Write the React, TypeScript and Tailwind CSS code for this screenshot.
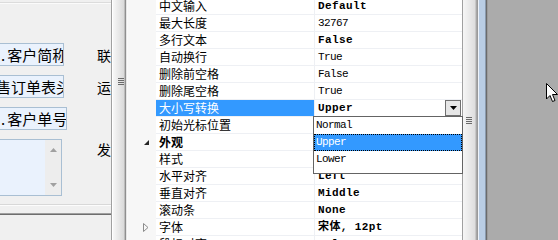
import React from "react";

type Row = {
  name: string;
  value?: string;
  bold?: boolean;
  selected?: boolean;
  category?: boolean;
  expand?: boolean;
};

const rows: Row[] = [
  { name: "中文输入", value: "Default", bold: true },
  { name: "最大长度", value: "32767" },
  { name: "多行文本", value: "False", bold: true },
  { name: "自动换行", value: "True" },
  { name: "删除前空格", value: "False" },
  { name: "删除尾空格", value: "True" },
  { name: "大小写转换", value: "Upper", bold: true, selected: true },
  { name: "初始光标位置", value: "Normal" },
  { name: "外观", category: true },
  { name: "样式", value: "" },
  { name: "水平对齐", value: "Left", bold: true },
  { name: "垂直对齐", value: "Middle", bold: true },
  { name: "滚动条", value: "None", bold: true },
  { name: "字体", value: "宋体, 12pt", bold: true, expand: true },
  { name: "段标对齐", value: "False", bold: true },
];

const cjk = { fontFamily: '"Noto Sans CJK SC", "Noto Sans", sans-serif' };
const mono = { fontFamily: '"Liberation Mono", "Noto Sans CJK SC", monospace' };

function Grip() {
  return (
    <div className="flex flex-col gap-[1px]">
      <div className="h-[1px] w-[6px] bg-[#6a6a6a]" />
      <div className="h-[1px] w-[6px] bg-[#6a6a6a]" />
      <div className="h-[1px] w-[6px] bg-[#6a6a6a]" />
      <div className="h-[1px] w-[6px] bg-[#6a6a6a]" />
    </div>
  );
}

function Value({ row }: { row: Row }) {
  if (row.category) return null;
  return (
    <span
      className={
        row.bold
          ? "text-[11px] font-bold tracking-[0.4px] text-black whitespace-nowrap"
          : "text-[11px] tracking-[-0.6px] text-black whitespace-nowrap"
      }
      style={mono}
    >
      {row.value}
    </span>
  );
}

export default function App() {
  return (
    <div className="relative flex h-[240px] w-[558px] overflow-hidden bg-[#f0f0f0]">
      {/* Left designer panel */}
      <div className="flex w-[111px] shrink-0 flex-col bg-[#f0f0f0]" style={cjk}>
        <div className="mt-[2px] h-[1px] w-full bg-[#dcdcdc]" />
        <div className="h-[1px] w-full bg-[#fbfbfb]" />
        <div className="mt-[39px] flex h-[23px] items-center">
          <div className="flex h-[23px] w-[67px] items-center overflow-hidden whitespace-nowrap border border-l-0 border-[#a9bfd3] bg-[#eaf2fd] text-[15px] leading-none text-black">
            <span className="ml-[1px]">.</span>
            <span className="ml-[2px]">客户简称</span>
          </div>
          <span className="ml-[33px] text-[14px] leading-none text-black">联</span>
        </div>
        <div className="mt-[9px] flex h-[23px] items-center">
          <div className="flex h-[23px] w-[67px] items-center overflow-hidden whitespace-nowrap border border-l-0 border-[#a9bfd3] bg-[#eaf2fd] text-[15px] leading-none text-black">
            <span className="ml-[-4px]">售订单表头</span>
          </div>
          <span className="ml-[33px] text-[14px] leading-none text-black">运</span>
        </div>
        <div className="mt-[9px] flex h-[23px] items-center">
          <div className="flex h-[23px] w-[67px] items-center overflow-hidden whitespace-nowrap border border-l-0 border-[#a9bfd3] bg-[#eaf2fd] text-[15px] leading-none text-black">
            <span className="ml-[1px]">.</span>
            <span className="ml-[2px]">客户单号</span>
          </div>
        </div>
        <div className="mt-[9px] flex h-[57px] items-start">
          <div className="flex h-[57px] w-[68px] justify-end border border-l-0 border-[#a9bfd3] bg-[#eaf2fd]">
            <div className="flex w-[16px] flex-col items-center justify-between bg-[#ededed] py-[8px]">
              <svg width="7" height="4" viewBox="0 0 7 4">
                <path d="M0 4 L3.5 0 L7 4 Z" fill="#a0a0a0" />
              </svg>
              <svg width="7" height="4" viewBox="0 0 7 4">
                <path d="M0 0 L3.5 4 L7 0 Z" fill="#a0a0a0" />
              </svg>
            </div>
          </div>
          <span className="ml-[35px] mt-[3px] text-[14px] leading-none text-black">发</span>
        </div>
        <div className="mt-[8px] h-[1px] w-full bg-[#d8d8d8]" />
        <div className="h-[1px] w-full bg-[#fcfcfc]" />
        <div className="mt-[7px] h-[1px] w-full bg-[#a0a0a0]" />
        <div className="h-[1px] w-full bg-[#6e6e6e]" />
      </div>

      {/* Splitter */}
      <div className="flex w-[17px] shrink-0">
        <div className="w-[1px] bg-[#a0a0a0]" />
        <div className="w-[1px] bg-[#ffffff]" />
        <div className="flex w-[11px] flex-col items-center bg-gradient-to-r from-[#f7f7f7] to-[#dadada] pt-[78px] pl-[5px]">
          <Grip />
        </div>
        <div className="w-[1px] bg-[#bdbdbd]" />
        <div className="w-[1px] bg-[#8f8f8f]" />
        <div className="w-[1px] bg-[#e6e6e6]" />
        <div className="w-[1px] bg-[#fafafa]" />
      </div>

      {/* Property grid */}
      <div className="relative w-[334px] shrink-0 bg-white" style={cjk}>
        <div className="mt-[-2px] flex flex-col">
          {rows.map((r, i) => (
            <div key={i} className="flex h-[17px]">
              <div className="flex w-[28px] shrink-0 items-center justify-end pr-[7px] bg-[#f7f7f7]">
                {r.category && (
                  <svg width="5" height="5" viewBox="0 0 5 5">
                    <path d="M5 0 L5 5 L0 5 Z" fill="#262626" />
                  </svg>
                )}
                {r.expand && (
                  <svg width="6" height="9" viewBox="0 0 6 9">
                    <path d="M0.5 0.5 L5 4.5 L0.5 8.5 Z" fill="none" stroke="#8c8c8c" />
                  </svg>
                )}
              </div>
              <div className="flex flex-1 border-b border-[#eef0f4]">
                <div
                  className={
                    r.selected
                      ? "flex w-[158px] shrink-0 items-center bg-[#3399ff] pl-[3px] text-[12px] leading-none text-white"
                      : r.category
                      ? "flex w-[158px] shrink-0 items-center pl-[3px] text-[12px] font-bold leading-none text-black"
                      : "flex w-[158px] shrink-0 items-center pl-[3px] text-[12px] leading-none text-black"
                  }
                >
                  {r.name}
                </div>
                <div className={r.category ? "w-[1px] shrink-0" : "w-[1px] shrink-0 bg-[#eef0f4]"} />
                <div className="flex flex-1 items-center justify-between pl-[3px]">
                  <Value row={r} />
                  {r.selected && (
                    <div className="mr-[1px] flex h-[16px] w-[16px] items-center justify-center border border-[#707070] bg-[#e6e6e6]">
                      <svg width="7" height="4" viewBox="0 0 7 4">
                        <path d="M0 0 L7 0 L3.5 4 Z" fill="#000" />
                      </svg>
                    </div>
                  )}
                </div>
              </div>
            </div>
          ))}
        </div>

        {/* Dropdown list */}
        <div className="absolute left-[185px] top-[116px] flex h-[58px] w-[150px] flex-col border border-[#646464] bg-white" style={mono}>
          <div className="flex h-[17px] items-center pl-[2px] text-[11px] tracking-[-0.6px] text-black">Normal</div>
          <div className="flex h-[17px] items-center border border-dotted border-black bg-[#3399ff] pl-[1px] text-[11px] tracking-[-0.6px] text-white">Upper</div>
          <div className="flex h-[17px] items-center pl-[2px] text-[11px] tracking-[-0.6px] text-black">Lower</div>
        </div>
      </div>

      {/* Right scrollbar / border area */}
      <div className="flex w-[26px] shrink-0">
        <div className="w-[1px] bg-[#a0a0a0]" />
        <div className="flex w-[12px] flex-col items-center bg-gradient-to-r from-[#f6f6f6] to-[#dedede] pt-[117px]">
          <Grip />
        </div>
        <div className="w-[1px] bg-[#c8c8c8]" />
        <div className="w-[1px] bg-[#a8a8a8]" />
        <div className="w-[1px] bg-[#9a9a9a]" />
        <div className="w-[1px] bg-[#eef3f9]" />
        <div className="w-[6px] bg-[#b9cde4]" />
        <div className="w-[1px] bg-[#8a9aad]" />
        <div className="w-[1px] bg-[#6b6b6b]" />
        <div className="w-[1px] bg-[#9c9c9c]" />
      </div>
      <div className="flex-1 bg-[#ababab]" />

      {/* Mouse cursor */}
      <svg className="absolute left-[546px] top-[83px]" width="13" height="20" viewBox="0 0 13 20">
        <path
          d="M0.5 0.5 L0.5 16 L4 12.5 L6.5 18.5 L9 17.5 L6.5 11.5 L11.5 11.5 Z"
          fill="#ffffff"
          stroke="#000000"
          strokeWidth="1"
          strokeLinejoin="miter"
        />
      </svg>
    </div>
  );
}
